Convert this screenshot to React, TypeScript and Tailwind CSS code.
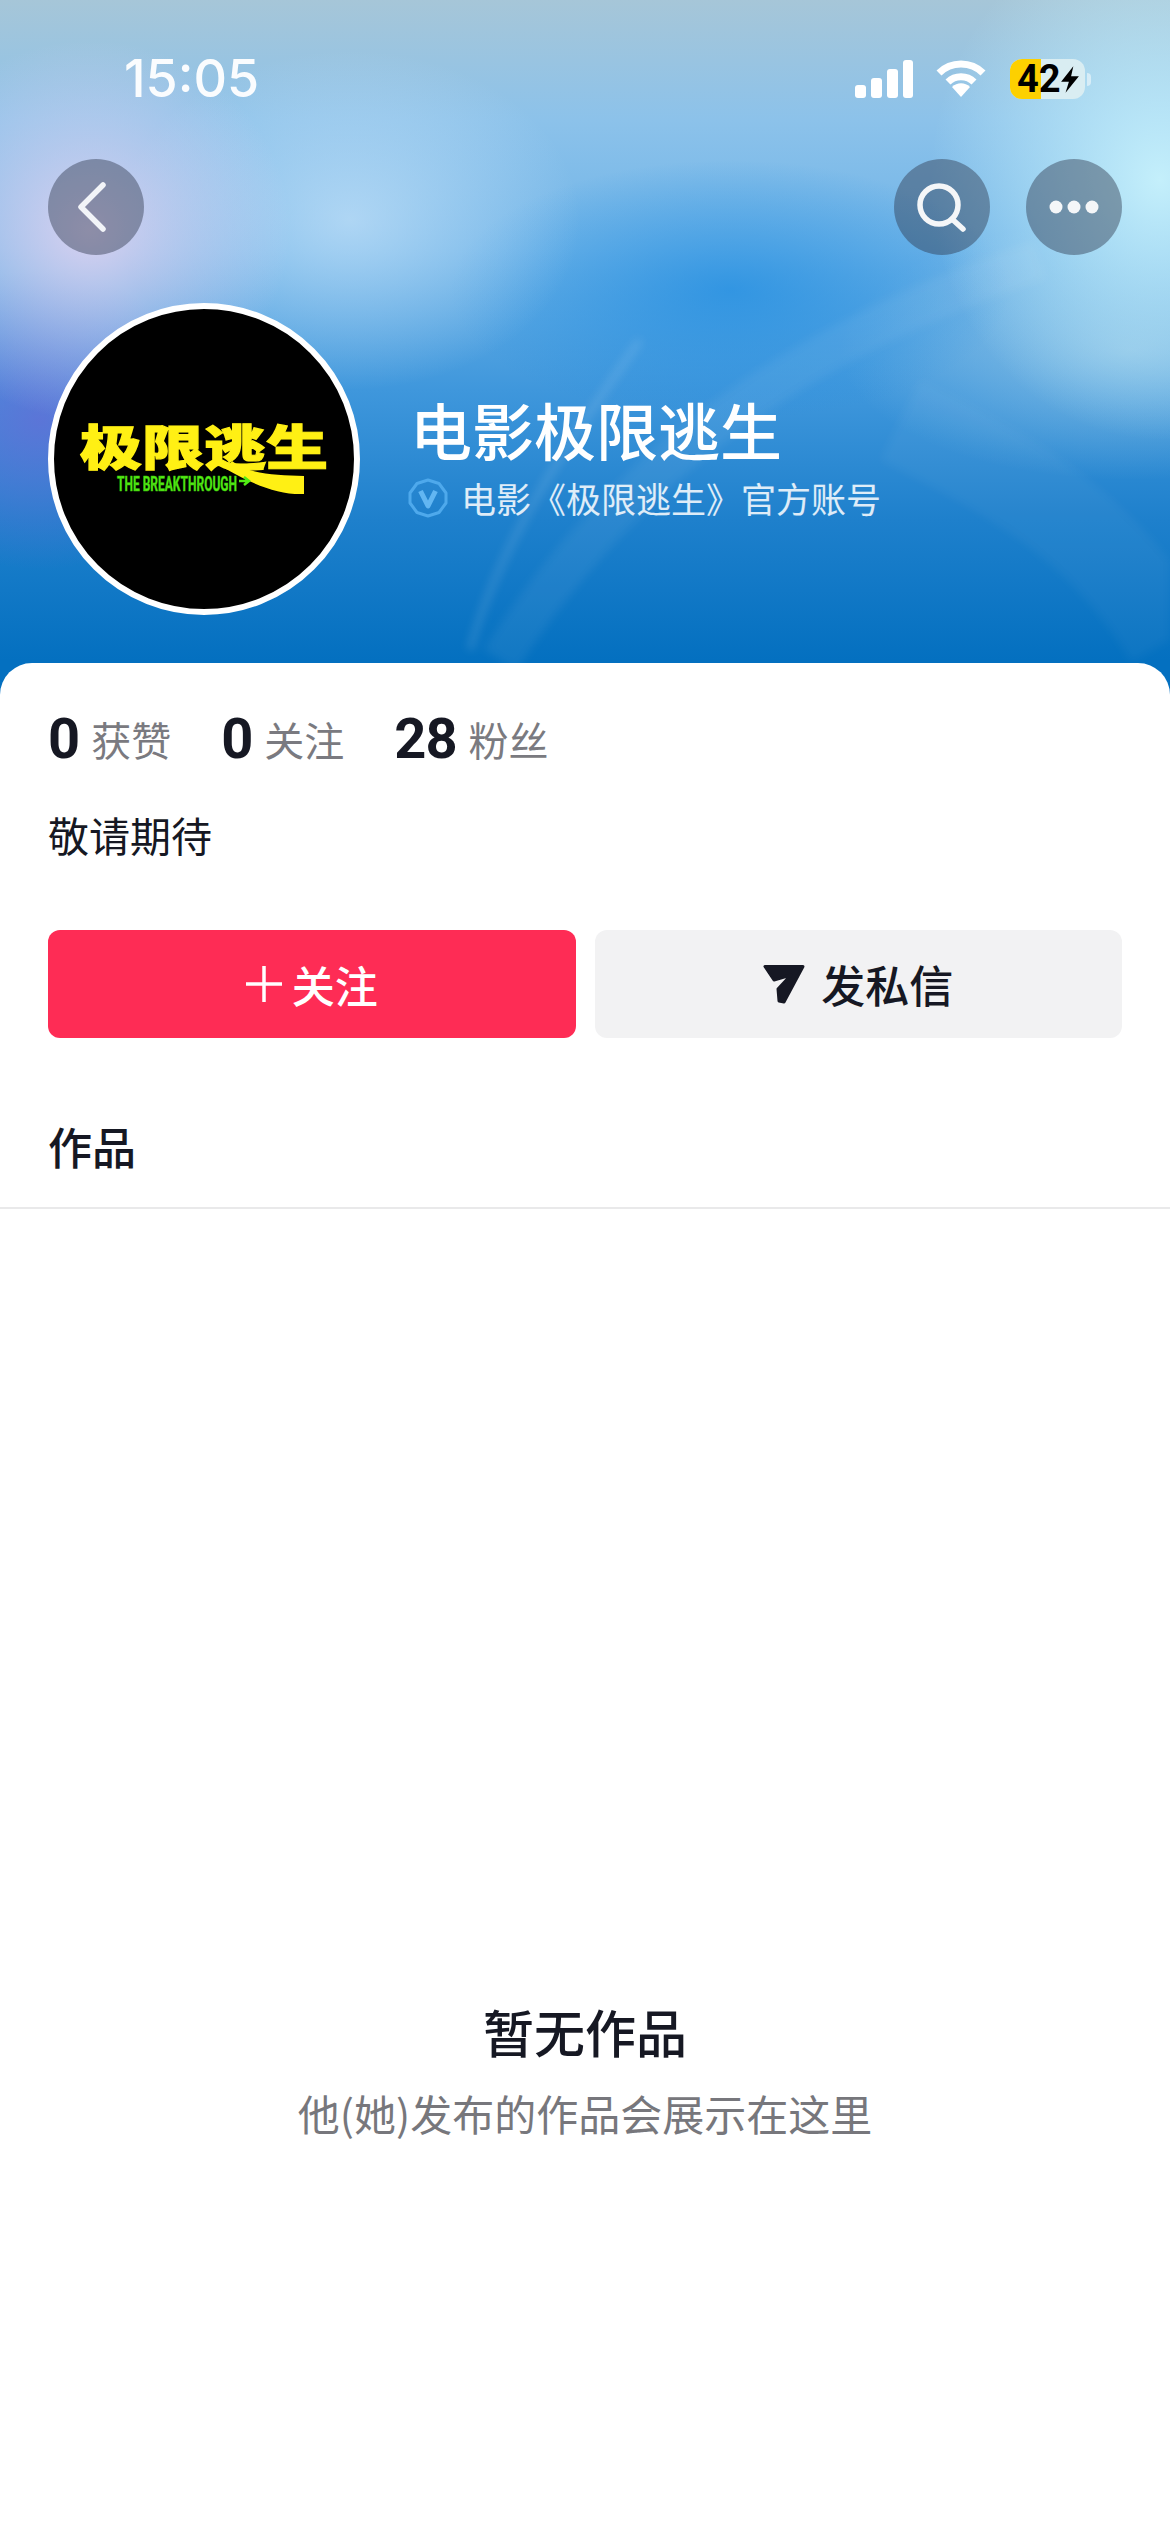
const cjk = "font-['Noto_Sans_CJK_SC','Noto_Sans',sans-serif]";
const num = "font-['Roboto','Noto_Sans_CJK_SC',sans-serif]";

function StatusBar() {
  return (
    <div className="flex h-[40px] items-center justify-between pl-[124px] pr-[79px]">
      <span className="font-['Inter',sans-serif] text-[52px] leading-none font-medium text-white/95">15:05</span>
      <div className="flex items-center">
        <svg width="58" height="38" viewBox="0 0 58 38" fill="white">
          <rect x="0" y="25" width="11" height="13" rx="3" />
          <rect x="16" y="18" width="11" height="20" rx="3" />
          <rect x="32" y="9" width="11" height="29" rx="3" />
          <rect x="48" y="0" width="10" height="38" rx="3" />
        </svg>
        <svg className="ml-[23px]" width="50" height="38" viewBox="0 0 50 38" fill="none" stroke="white" strokeWidth="7">
          <path d="M3 13 C15 1 35 1 47 13" />
          <path d="M12 22 C19 15 31 15 38 22" />
          <path d="M16 27 C21 22 29 22 34 27 L25 37 Z" fill="white" stroke="none" />
        </svg>
        <div className="relative ml-[24px] flex h-[40px] w-[75px] rounded-[12px] bg-[#d9edf2]">
          <div className="h-full w-[31px] rounded-l-[12px] bg-[#fdd000]" />
          <span className="absolute top-[1px] left-[7px] font-['Roboto',sans-serif] text-[38px] leading-[38px] font-bold text-black">42</span>
          <svg className="absolute top-[7px] left-[50px]" width="20" height="27" viewBox="0 0 18 24" fill="black">
            <path d="M12 0 L1 14 H8 L5 24 L17 9 H10 Z" />
          </svg>
        </div>
        <div className="ml-[2px] h-[13px] w-[4px] rounded-r-full bg-white/50" />
      </div>
    </div>
  );
}

function NavBar() {
  const circle = "flex h-[96px] w-[96px] items-center justify-center rounded-full bg-[rgba(45,55,75,0.44)]";
  return (
    <div className="mt-[60px] flex items-center justify-between px-[48px]">
      <div className={circle}>
        <svg width="96" height="96" viewBox="0 0 96 96" fill="none" stroke="#f2f4f8" strokeWidth="5.5" strokeLinecap="round" strokeLinejoin="round">
          <path d="M55 26 L33 48 L55 70" />
        </svg>
      </div>
      <div className="flex gap-[36px]">
        <div className={circle}>
          <svg width="96" height="96" viewBox="0 0 96 96" fill="none" stroke="#f4f6f8" strokeWidth="5.5" strokeLinecap="round">
            <circle cx="45" cy="46" r="19" />
            <path d="M58 60 L69 70" />
          </svg>
        </div>
        <div className={circle}>
          <svg width="96" height="96" viewBox="0 0 96 96" fill="#f4f6f8">
            <circle cx="30" cy="48" r="6.5" />
            <circle cx="48" cy="48" r="6.5" />
            <circle cx="66" cy="48" r="6.5" />
          </svg>
        </div>
      </div>
    </div>
  );
}

function Avatar() {
  return (
    <div className="h-[312px] w-[312px] shrink-0 overflow-hidden rounded-full border-[6px] border-white bg-black">
      <svg width="300" height="300" viewBox="0 0 300 300">
        <g transform="translate(26 156) scale(1 0.74)">
          <text x="0" y="0" fontSize="64" fontWeight="900" fill="#fff014" stroke="#fff014" strokeWidth="1.5" fontFamily="'Noto Sans CJK SC', sans-serif" textLength="248" lengthAdjust="spacingAndGlyphs">极限逃生</text>
        </g>
        <path d="M178 152 C196 166 222 166 250 167 L250 185 C225 186 200 176 172 160 Z" fill="#fff014" />
        <text x="63" y="182" fontSize="20" fontWeight="700" fill="#52ee14" stroke="#3fc40c" strokeWidth="0.5" fontFamily="Roboto, sans-serif" textLength="120" lengthAdjust="spacingAndGlyphs">THE BREAKTHROUGH</text>
        <path d="M185 172 H194 M190 168 L195 172 L190 176" fill="none" stroke="#52ee14" strokeWidth="2.5" />
      </svg>
    </div>
  );
}

function VBadge() {
  return (
    <svg width="40" height="40" viewBox="0 0 40 40" fill="none">
      <path d="M20 2 L31 5.5 L38 15 L38 25 L31 34.5 L20 38 L9 34.5 L2 25 L2 15 L9 5.5 Z" stroke="#4ea9ec" strokeWidth="3" strokeLinejoin="round" />
      <path d="M12.5 13 L20 28 L27.5 13" stroke="#62b6f2" strokeWidth="5" strokeLinejoin="round" />
    </svg>
  );
}

function Header() {
  return (
    <div className="relative h-[700px] overflow-hidden bg-[radial-gradient(ellipse_200px_190px_at_90px_230px,rgba(222,210,240,0.95),transparent),radial-gradient(ellipse_230px_260px_at_1160px_180px,rgba(200,242,252,0.95),transparent),radial-gradient(ellipse_170px_150px_at_40px_420px,rgba(100,110,215,0.8),transparent),radial-gradient(ellipse_230px_170px_at_350px_220px,rgba(205,230,250,0.65),transparent),radial-gradient(ellipse_280px_130px_at_730px_290px,rgba(30,140,225,0.7),transparent),radial-gradient(ellipse_290px_130px_at_1130px_350px,rgba(170,210,232,0.6),transparent),linear-gradient(180deg,#a6c6d8_0px,#8cc2ea_120px,#6fb4e8_250px,#3f97dc_390px,#1e80cc_520px,#0470c0_660px)]">
      <svg className="absolute inset-0 blur-[5px]" width="1170" height="700" fill="none">
        <path d="M1040 260 C830 330 640 440 500 660" stroke="rgba(255,255,255,0.06)" strokeWidth="40" />
        <path d="M640 340 C570 440 500 540 470 650" stroke="rgba(255,255,255,0.12)" strokeWidth="7" />
        <path d="M900 420 C1000 470 1100 520 1170 640" stroke="rgba(255,255,255,0.04)" strokeWidth="90" />
      </svg>
      <div className="relative pt-[59px]">
        <StatusBar />
        <NavBar />
        <div className="mt-[48px] flex items-center gap-[50px] px-[48px]">
          <Avatar />
          <div className="-mt-[8px]">
            <h1 className={`${cjk} text-[62px] leading-[80px] font-medium text-white`}>电影极限逃生</h1>
            <div className="mt-[5px] -ml-[2px] flex items-center gap-[13px]">
              <VBadge />
              <span className={`${cjk} text-[35px] leading-[48px] text-white/85`}>电影《极限逃生》官方账号</span>
            </div>
          </div>
        </div>
      </div>
    </div>
  );
}

function Stat({ value, label }: { value: string; label: string }) {
  return (
    <div className="flex items-center gap-[12px]">
      <span className={`${num} text-[56px] leading-[64px] font-bold tracking-[-1px] text-[#161823]`}>{value}</span>
      <span className={`${cjk} text-[40px] leading-[64px] text-[#7a7a80]`}>{label}</span>
    </div>
  );
}

export default function App() {
  return (
    <div className={`h-[2532px] overflow-hidden bg-white ${cjk}`}>
      <Header />
      <div className="relative -mt-[37px] rounded-t-[32px] bg-white">
        <div className="flex gap-[50px] px-[48px] pt-[44px]">
          <Stat value="0" label="获赞" />
          <Stat value="0" label="关注" />
          <Stat value="28" label="粉丝" />
        </div>
        <p className="mt-[33px] px-[48px] text-[41px] leading-[60px] text-[#161823]">敬请期待</p>
        <div className="mt-[66px] flex gap-[19px] px-[48px]">
          <button className="flex h-[108px] flex-1 items-center justify-center gap-[10px] rounded-[12px] bg-[#fe2c55] text-white">
            <svg width="36" height="36" viewBox="0 0 36 36" fill="none" stroke="white" strokeWidth="3.5">
              <path d="M18 0 V36 M0 18 H36" />
            </svg>
            <span className="text-[43px] leading-none font-medium">关注</span>
          </button>
          <button className="flex h-[108px] flex-1 items-center justify-center gap-[16px] rounded-[12px] bg-[#f2f2f3] text-[#161823]">
            <svg width="42" height="40" viewBox="0 0 42 40" fill="#161823" stroke="#161823" strokeWidth="3" strokeLinejoin="round">
              <path d="M2 2.5 H40 L21 38 L16 37 L15 25 L28 11 L11 16 Z" />
            </svg>
            <span className="text-[44px] leading-none font-medium">发私信</span>
          </button>
        </div>
        <div className="mt-[77px] border-b-2 border-[#e9e9ea] px-[48px] pb-[30px]">
          <h2 className="text-[44px] leading-[62px] font-medium text-[#161823]">作品</h2>
        </div>
        <div className="mt-[787px] flex flex-col items-center">
          <h3 className="text-[51px] leading-[70px] font-medium text-[#161823]">暂无作品</h3>
          <p className="mt-[19px] text-[42px] leading-[56px] text-[#77777c]">他(她)发布的作品会展示在这里</p>
        </div>
      </div>
    </div>
  );
}
